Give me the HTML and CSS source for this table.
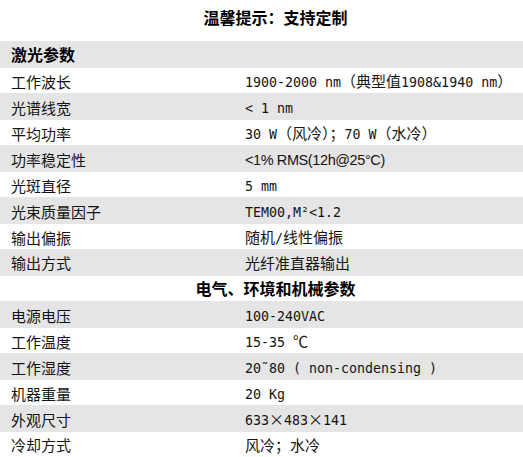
FILE: index.html
```html
<!DOCTYPE html>
<html lang="zh-CN">
<head>
<meta charset="utf-8">
<title>温馨提示：支持定制</title>
<link rel="stylesheet" href="styles.css">
</head>
<body>
<div class="page">
  <div class="sheet">
    <div class="title">温馨提示：支持定制</div>
    <div class="table">
      <div class="row g head"><div class="label">激光参数</div><div class="val"></div></div>
      <div class="row"><div class="label">工作波长</div><div class="val"><span class="m">1900-2000 nm</span>（典型值<span class="m">1908&amp;1940 nm</span>）</div></div>
      <div class="row g"><div class="label">光谱线宽</div><div class="val"><span class="m">&lt; 1 nm</span></div></div>
      <div class="row"><div class="label">平均功率</div><div class="val"><span class="m">30 W</span>（风冷）；<span class="m">70 W</span>（水冷）</div></div>
      <div class="row g"><div class="label">功率稳定性</div><div class="val"><span class="p">&lt;1% RMS(12h@25°C)</span></div></div>
      <div class="row"><div class="label">光斑直径</div><div class="val"><span class="m">5 mm</span></div></div>
      <div class="row g"><div class="label">光束质量因子</div><div class="val"><span class="m">TEM00,M²&lt;1.2</span></div></div>
      <div class="row"><div class="label">输出偏振</div><div class="val">随机<span class="m">/</span>线性偏振</div></div>
      <div class="row g"><div class="label">输出方式</div><div class="val">光纤准直器输出</div></div>
      <div class="row section"><div class="center">电气、环境和机械参数</div></div>
      <div class="row g"><div class="label">电源电压</div><div class="val"><span class="m">100-240VAC</span></div></div>
      <div class="row"><div class="label">工作温度</div><div class="val"><span class="m">15-35 </span>℃</div></div>
      <div class="row g"><div class="label">工作湿度</div><div class="val"><span class="m">20˜80 ( non-condensing )</span></div></div>
      <div class="row"><div class="label">机器重量</div><div class="val"><span class="m">20 Kg</span></div></div>
      <div class="row g"><div class="label">外观尺寸</div><div class="val"><span class="m">633</span>×<span class="m">483</span>×<span class="m">141</span></div></div>
      <div class="row"><div class="label">冷却方式</div><div class="val">风冷；水冷</div></div>
    </div>
  </div>
</div>
</body>
</html>
```

FILE: styles.css
```css
html, body {
  margin: 0;
  padding: 0;
  background: #ffffff;
}

body {
  font-family: "Noto Sans CJK SC", "Noto Sans", sans-serif;
  color: #141414;
  font-size: 15px;
}

.page {
  width: 523px;
  height: 457px;
  overflow: hidden;
}

.sheet {
  width: 551px;
}

.title {
  height: 41px;
  box-sizing: border-box;
  padding-top: 5px;
  line-height: 24px;
  text-align: center;
  font-weight: 700;
  font-size: 16px;
  color: #000000;
}

.table {
  border-top: 1px solid #e5e5e5;
}

.row {
  display: grid;
  grid-template-columns: 245px 1fr;
  height: 25px;
  border-bottom: 1px solid #e5e5e5;
  align-items: center;
  line-height: 25px;
  white-space: nowrap;
}

.row.g {
  background: #e5e5e5;
}

.label {
  padding-left: 11px;
}

.head .label {
  font-weight: 700;
  font-size: 16px;
  color: #000000;
}

.section {
  display: flex;
  justify-content: center;
}

.center {
  font-weight: 700;
  font-size: 16px;
  color: #000000;
}

.m {
  font-family: "DejaVu Sans Mono", monospace;
  font-size: 13.3px;
}

.p {
  font-family: "Liberation Sans", Arial, sans-serif;
  font-size: 14.5px;
  letter-spacing: -0.4px;
}
```
